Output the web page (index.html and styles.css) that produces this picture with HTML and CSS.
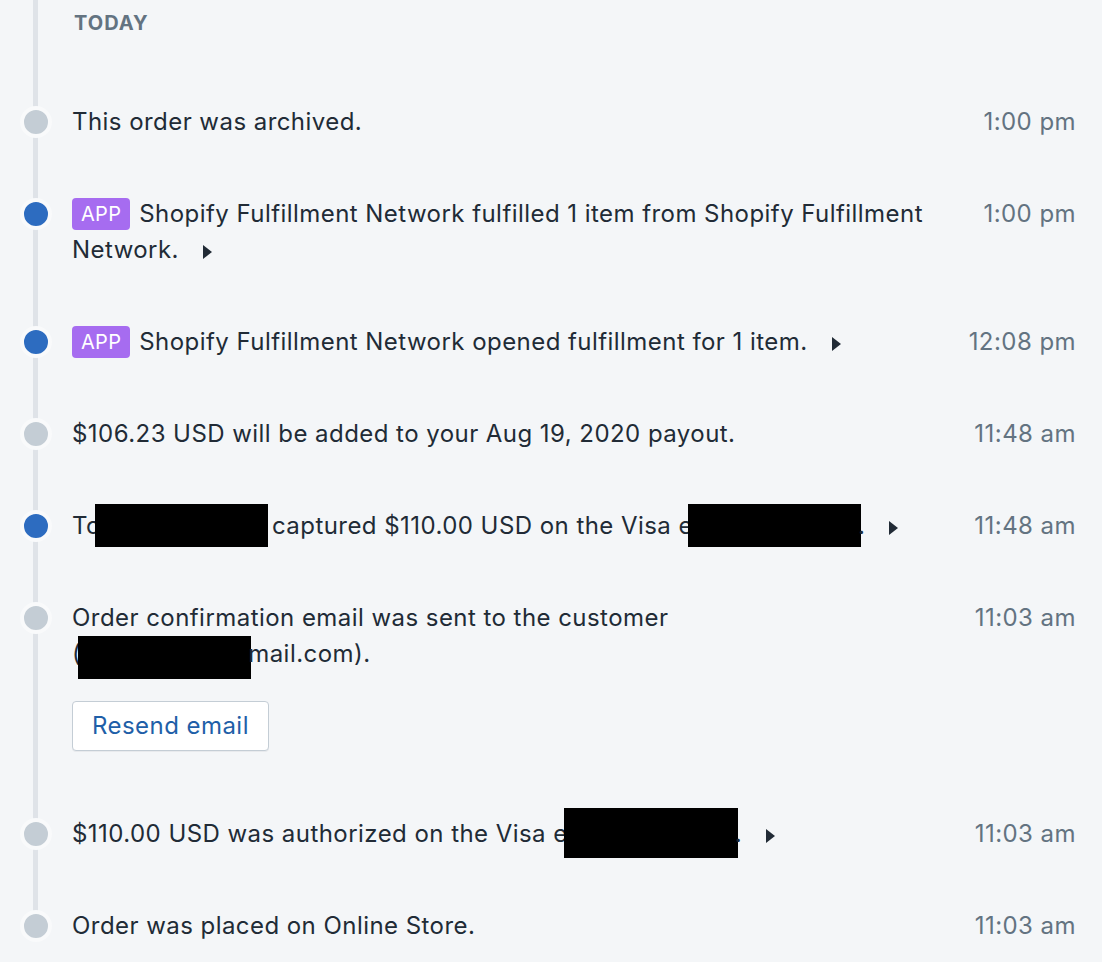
FILE: index.html
```html
<!DOCTYPE html>
<html lang="en">
<head>
<meta charset="utf-8">
<title>Timeline</title>
<link rel="stylesheet" href="styles.css">
</head>
<body>
<div class="timeline">
  <div class="day">TODAY</div>
  <ul class="events">
    <li class="event">
      <span class="dot"></span>
      <div class="msg">This order was archived.</div>
      <div class="time">1:00 pm</div>
    </li>
    <li class="event">
      <span class="dot dot-blue"></span>
      <div class="msg"><span class="badge">APP</span>Shopify Fulfillment Network fulfilled 1 item from Shopify Fulfillment Network.<span class="caret"></span></div>
      <div class="time">1:00 pm</div>
    </li>
    <li class="event">
      <span class="dot dot-blue"></span>
      <div class="msg"><span class="badge">APP</span>Shopify Fulfillment Network opened fulfillment for 1 item.<span class="caret"></span></div>
      <div class="time">12:08 pm</div>
    </li>
    <li class="event">
      <span class="dot"></span>
      <div class="msg">$106.23 USD will be added to your Aug 19, 2020 payout.</div>
      <div class="time">11:48 am</div>
    </li>
    <li class="event">
      <span class="dot dot-blue"></span>
      <div class="msg">To<span class="redact redact-a"></span>captured $110.00 USD on the Visa e<span class="redact redact-b"></span>.<span class="caret"></span></div>
      <div class="time">11:48 am</div>
    </li>
    <li class="event event-action">
      <span class="dot"></span>
      <div class="msg">Order confirmation email was sent to the customer <span class="nowrap">(<span class="redact redact-c"></span>mail.com).</span>
        <div class="actions"><button class="btn" type="button">Resend email</button></div>
      </div>
      <div class="time">11:03 am</div>
    </li>
    <li class="event">
      <span class="dot"></span>
      <div class="msg">$110.00 USD was authorized on the Visa e<span class="redact redact-d"></span>.<span class="caret"></span></div>
      <div class="time">11:03 am</div>
    </li>
    <li class="event">
      <span class="dot"></span>
      <div class="msg">Order was placed on Online Store.</div>
      <div class="time">11:03 am</div>
    </li>
  </ul>
</div>
</body>
</html>
```
FILE: styles.css
```css
html, body {
  margin: 0;
  padding: 0;
  background: #f4f6f8;
}
body {
  font-family: "Inter", "Noto Sans", "Liberation Sans", sans-serif;
  color: #212b36;
  font-size: 24px;
  letter-spacing: 0.45px;
  line-height: 36px;
}
.timeline {
  position: relative;
  padding: 5px 26px 0 0;
}
.timeline::before {
  content: "";
  position: absolute;
  left: 33px;
  top: 0;
  bottom: 20px;
  width: 5px;
  background: #dfe3e8;
}
.day {
  padding-left: 74px;
  font-size: 20px;
  font-weight: 700;
  color: #637381;
  letter-spacing: 1px;
  line-height: 36px;
}
.events {
  list-style: none;
  margin: 63px 0 0;
  padding: 0;
  display: flex;
  flex-direction: column;
  gap: 56px;
}
.event {
  display: grid;
  grid-template-columns: 72px 1fr 130px;
  align-items: start;
  position: relative;
}
.dot {
  width: 24px;
  height: 24px;
  margin: 2px 0 0 20px;
  border-radius: 50%;
  background: #c4cdd5;
  border: 4px solid #f9fafb;
  position: relative;
}
.dot-blue {
  background: #2d6cc0;
}
.msg {
  padding-right: 8px;
}
.time {
  text-align: right;
  color: #637381;
  white-space: nowrap;
}
.badge {
  display: inline-block;
  vertical-align: top;
  margin: 2px 9px 0 0;
  height: 32px;
  line-height: 32px;
  padding: 0 9px;
  border-radius: 4px;
  background: #a66cf0;
  color: #ffffff;
  font-size: 20px;
  letter-spacing: 0.3px;
}
.caret {
  display: inline-block;
  width: 0;
  height: 0;
  margin-left: 24px;
  border-top: 7px solid transparent;
  border-bottom: 7px solid transparent;
  border-left: 9px solid #212b36;
  vertical-align: -1px;
}
.redact {
  display: inline-block;
  background: #000;
  vertical-align: top;
}
.redact-a {
  width: 173px;
  height: 43px;
  margin: -4px 4px -3px -6px;
}
.redact-b {
  width: 173px;
  height: 43px;
  margin: -4px -3px -3px -5px;
}
.redact-c {
  width: 173px;
  height: 43px;
  margin: 0 -3px -7px -3px;
}
.redact-d {
  width: 174px;
  height: 50px;
  margin: -8px -3px -6px -4px;
}
.nowrap {
  white-space: nowrap;
}
.actions {
  margin-top: 29px;
  margin-bottom: 9px;
}
.btn {
  font-family: inherit;
  font-size: 24px;
  letter-spacing: 0.45px;
  line-height: 48px;
  height: 50px;
  padding: 0 19px;
  background: #ffffff;
  color: #1f5fa8;
  border: 1px solid #c4cdd5;
  border-radius: 4px;
  box-shadow: 0 1px 0 rgba(22, 29, 37, 0.05);
  cursor: pointer;
}
```
